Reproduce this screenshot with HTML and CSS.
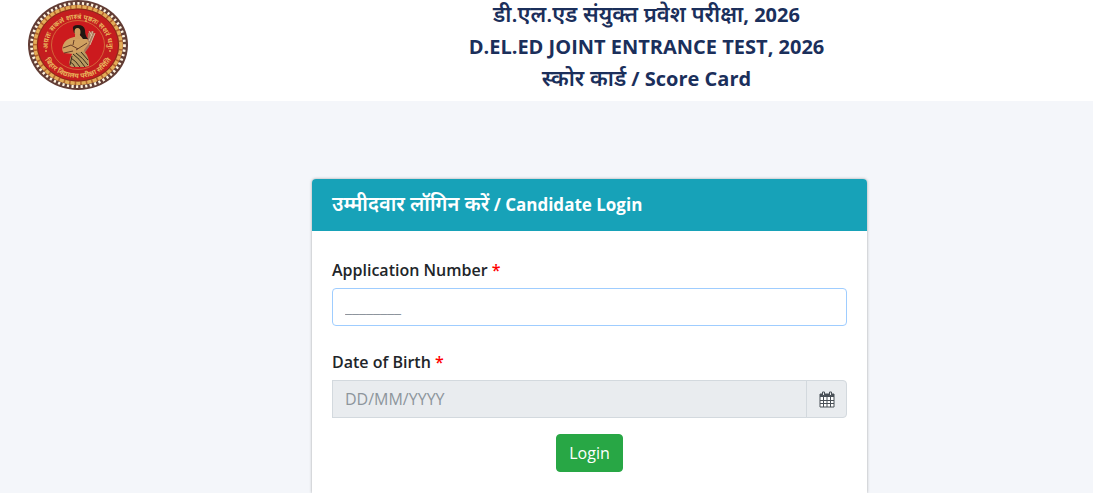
FILE: index.html
```html
<!DOCTYPE html>
<html lang="en">
<head>
    <meta charset="UTF-8">
    <meta name="viewport" content="width=device-width, initial-scale=1.0">
    <title>D.El.Ed Joint Entrance Test, 2026</title>
    <link rel="stylesheet" href="styles.css">
</head>
<body>
    <header class="header">
        <div class="logo">
            <svg width="100" height="90" viewBox="0 0 100 90" aria-hidden="true">
                <defs>
                    <path id="arcTop" d="M21 53 A30 27 0 1 1 79 53"/>
                    <path id="arcBottom" d="M13 45 A37 33 0 0 0 87 45"/>
                </defs>
                <ellipse cx="50" cy="45" rx="50" ry="45" fill="#623d35"/>
                <ellipse cx="50" cy="45" rx="45" ry="40" fill="#b5652c"/>
                <ellipse cx="50" cy="45" rx="46.5" ry="41.7" fill="none" stroke="#fff3df" stroke-width="2.8" stroke-dasharray="2.2 2.4"/>
                <ellipse cx="50" cy="45" rx="43" ry="38.3" fill="none" stroke="#e2ad58" stroke-width="3.4" stroke-dasharray="4 1.6"/>
                <ellipse cx="50" cy="45" rx="40.6" ry="36" fill="#c41e1f" stroke="#8d241b" stroke-width="1"/>
                <ellipse cx="50" cy="45" rx="26.5" ry="24.5" fill="#cc1a1e" stroke="#d98545" stroke-width="0.7"/>
                <text class="seal-text"><textPath href="#arcTop" startOffset="50%" text-anchor="middle">अग्रतः सकलं शास्त्रं पृष्ठतः सशरं धनुः</textPath></text>
                <text class="seal-text"><textPath href="#arcBottom" startOffset="50%" text-anchor="middle">बिहार विद्यालय परीक्षा समिति</textPath></text>
                <circle cx="18" cy="51" r="0.9" fill="#e9b45c"/>
                <circle cx="82" cy="51" r="0.9" fill="#e9b45c"/>
                <path d="M60 33 L64 31 L67 34 L61 47 L56 54 L54 51 L59 43Z" fill="#a8765a"/>
                <path d="M61 31 L64 36 M65 31 L61 41 M67 33 L62 45" stroke="#dcc0a0" stroke-width="0.9"/>
                <path d="M46 37 Q37 39 35 45 Q33 50 36 53 L45 54 L44 60 L57 60 L56 50 L61 43 Q60 38 53 36Z" fill="#d0a060"/>
                <path d="M35 48 L43 45 L50 49 M48 50 L59 43 M36 53 L45 51 M46 40 L45 45" fill="none" stroke="#5a3220" stroke-width="0.9"/>
                <path d="M45 29 Q44 25 50 25 Q56 25 57 30 Q57 36 60 39 L55 39 L52 35 L46 33Z" fill="#211712"/>
                <ellipse cx="49.5" cy="32" rx="3" ry="4" fill="#cf9a5c"/>
                <path d="M47 35 H52 V39 H47Z" fill="#cf9a5c"/>
                <path d="M44 54 L56 51 Q62 58 61 66 L57 67 H44 Q40 66 42 59Z" fill="#b89a60"/>
                <path d="M45 54 Q51 58 57 67 M48 53 Q55 58 60 65 M43 58 Q48 61 52 67 M42 62 Q45 63 47 67 M44 56 L42 65 M53 52 L60 60" fill="none" stroke="#382a1a" stroke-width="1"/>
            </svg>
        </div>
        <div class="title">
            <div><span class="hindi" lang="hi">डी.एल.एड संयुक्त प्रवेश परीक्षा</span>, 2026</div>
            <div>D.EL.ED JOINT ENTRANCE TEST, 2026</div>
            <div><span class="hindi" lang="hi">स्कोर कार्ड</span> / Score Card</div>
        </div>
    </header>
    <main class="content">
        <section class="card">
            <h1 class="card-header"><span class="hindi" lang="hi">उम्मीदवार लॉगिन करें</span> / Candidate Login</h1>
            <form class="card-body">
                <div class="form-group">
                    <label for="appNo">Application Number <span class="required">*</span></label>
                    <input type="text" id="appNo" class="form-control" placeholder="________">
                </div>
                <div class="form-group">
                    <label for="dob">Date of Birth <span class="required">*</span></label>
                    <div class="input-group">
                        <input type="text" id="dob" class="form-control" placeholder="DD/MM/YYYY" readonly>
                        <button type="button" class="calendar" aria-label="Choose date">
                            <svg width="16" height="17" viewBox="0 0 16 17">
                                <path d="M1 3H15V16H1Z" fill="#fff" stroke="#495057"/>
                                <path d="M1 3H15V6H1Z" fill="#495057"/>
                                <path d="M1 9.5H15M1 12.5H15M4.5 6V16M8 6V16M11.5 6V16" stroke="#495057"/>
                                <path d="M3.5 1H5.5V4.5H3.5ZM10.5 1H12.5V4.5H10.5Z" fill="#e9ecef" stroke="#495057"/>
                            </svg>
                        </button>
                    </div>
                </div>
                <div class="actions">
                    <button type="submit" class="btn">Login</button>
                </div>
            </form>
        </section>
    </main>
</body>
</html>
```
FILE: styles.css
```css
* {
    box-sizing: border-box;
}
body {
    margin: 0;
    font-family: "Segoe UI", "Open Sans", "Noto Sans", sans-serif;
    font-size: 16px;
    line-height: 24px;
    color: #212529;
    background: #f4f6fa;
}
.header {
    display: flex;
    background: #fff;
    padding-bottom: 6px;
}
.logo {
    flex: 0 0 200px;
    padding-left: 28px;
}
.logo svg {
    display: block;
}
.seal-text {
    font-size: 7px;
    font-weight: bold;
    fill: #e9b45c;
}
.title {
    flex: 1;
    text-align: center;
    font-size: 20px;
    font-weight: bold;
    line-height: 32px;
    color: #1b2f5b;
    margin-top: -1px;
}
.title > div {
    height: 32px;
}
.hindi {
    font-weight: 600;
    line-height: 1;
}
.title .hindi {
    font-size: 22px;
}
.content {
    display: grid;
    grid-template-columns: 312fr 555fr 226fr;
    padding-top: 78px;
}
.card {
    grid-column: 2;
    background: #fff;
    border-radius: 4px 4px 0 0;
    box-shadow: 0 0 3px rgba(0, 0, 0, 0.35);
    overflow: hidden;
}
.card-header {
    margin: 0;
    padding: 14px 20px;
    background: #17a2b8;
    color: #fff;
    font-size: 17px;
    font-weight: bold;
    line-height: 24px;
}
.card-header .hindi {
    font-size: 20px;
}
.card-body {
    padding: 27px 20px 21px;
}
.form-group {
    margin-bottom: 24px;
}
label {
    display: block;
    margin-bottom: 6px;
    font-weight: 600;
}
.required {
    color: #f00;
}
.form-control {
    display: block;
    width: 100%;
    height: 38px;
    padding: 6px 12px;
    border: 1px solid #9fcdff;
    border-radius: 4px;
    background: #fff;
    font: inherit;
    color: #495057;
}
.form-control::placeholder {
    color: #8d959c;
    opacity: 1;
}
.input-group {
    display: flex;
}
.input-group .form-control {
    flex: 1;
    border-color: #d3d9de;
    border-radius: 0;
    background: #e9ecef;
}
.calendar {
    display: flex;
    align-items: center;
    justify-content: center;
    width: 41px;
    margin-left: -1px;
    padding: 0;
    border: 1px solid #d3d9de;
    border-radius: 0 4px 4px 0;
    background: #e9ecef;
}
.actions {
    margin-top: -8px;
    text-align: center;
}
.btn {
    height: 38px;
    padding: 6px 12px;
    border: 1px solid #28a745;
    border-radius: 4px;
    background: #28a745;
    color: #fff;
    font: inherit;
    cursor: pointer;
}
```
